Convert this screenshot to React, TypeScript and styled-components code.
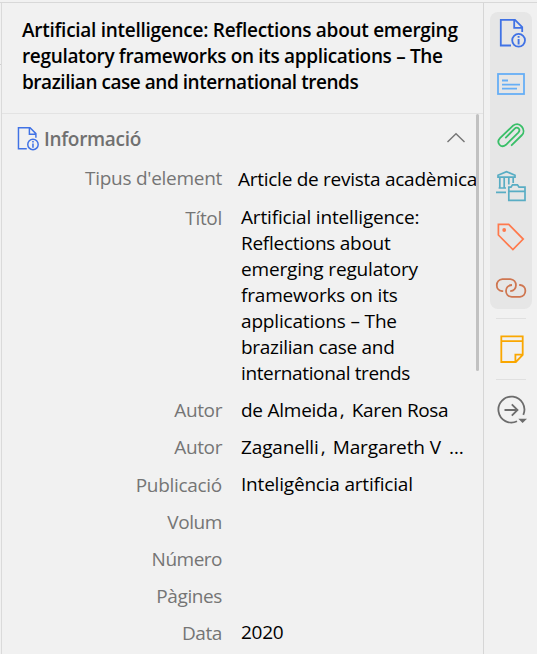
import React from "react";
import styled, { createGlobalStyle } from "styled-components";

const GlobalStyle = createGlobalStyle`
  * { box-sizing: border-box; }
  body { margin: 0; background: #f1f1f1; overflow: hidden; }
`;

const Window = styled.div`
  display: flex;
  flex-direction: column;
  width: 537px;
  height: 654px;
  padding-top: 2px;
  background: #f1f1f1;
  font: 19px/26px "Open Sans", "Noto Sans", sans-serif;
  color: #000;
  overflow: hidden;
`;
const TopRule = styled.div`
  flex: none;
  height: 1px;
  background: #d8d8d8;
`;
const Columns = styled.div`
  display: flex;
  flex: 1;
  min-height: 0;
`;
const Edge = styled.div`
  flex: none;
  width: 2px;
  border-right: 1px solid #dadada;
`;
const EdgeTick = styled.div`
  height: 1px;
  margin-top: 61px;
  background: #cfcfcf;
`;
const Pane = styled.main`
  flex: none;
  display: flex;
  flex-direction: column;
  width: 481px;
`;
const Title = styled.h1`
  flex: none;
  height: 111px;
  margin: 0;
  padding: 14px 0 0 20px;
  border-bottom: 1px solid #e3e3e3;
  font-size: 19px;
  line-height: 26px;
  font-weight: 600;
`;
const Line = styled.span<{ $track?: number }>`
  display: block;
  white-space: pre;
  letter-spacing: ${(p) => p.$track ?? 0}px;
`;
const Body = styled.div`
  display: flex;
  flex: 1;
  min-height: 0;
`;
const Fields = styled.section`
  flex: none;
  width: 474px;
`;
const ScrollThumb = styled.div`
  flex: none;
  width: 3px;
  height: 257px;
  border-radius: 2px;
  background: #c1c1c1;
`;
const SectionHead = styled.header`
  display: flex;
  align-items: center;
  height: 48px;
  margin-bottom: 4px;
  padding: 0 10px 0 15px;
`;
const SectionName = styled.h2`
  flex: 1;
  margin: 1px 0 0 5px;
  font-size: 19px;
  line-height: 26px;
  font-weight: 600;
  color: #707070;
`;
const Rows = styled.div`
  display: flex;
  flex-direction: column;
  gap: 11px;
`;
const Row = styled.div<{ $height?: number }>`
  display: grid;
  grid-template-columns: 220px 1fr;
  column-gap: 19px;
  min-height: ${(p) => p.$height ?? 26}px;
`;
const Label = styled.div<{ $drop?: number }>`
  display: flex;
  justify-content: flex-end;
  padding-top: ${(p) => Math.max(p.$drop ?? 0, 0)}px;
  margin-top: ${(p) => Math.min(p.$drop ?? 0, 0)}px;
  height: 26px;
  color: #757575;
`;
const Value = styled.div<{ $menu?: boolean }>`
  display: flex;
  flex-direction: column;
  margin-left: ${(p) => (p.$menu ? -3 : 0)}px;
  white-space: nowrap;
`;
const Names = styled.div`
  display: flex;
`;
const Comma = styled.span`
  width: 14px;
  padding-left: 2px;
`;
const Ellipsis = styled.span`
  margin-left: 8px;
`;
const SideNav = styled.nav`
  flex: 1;
  display: flex;
  flex-direction: column;
  align-items: center;
  padding: 9px 5px 0 6px;
  border-left: 1px solid #d6d6d6;
`;
const NavGroup = styled.div`
  flex: none;
  display: flex;
  flex-direction: column;
  gap: 19px;
  width: 42px;
  height: 297px;
  margin-bottom: 9px;
  padding-top: 5px;
  border-radius: 8px;
  background: #e6e6e6;
`;
const NavButton = styled.div<{ $height?: number; $indent?: number }>`
  flex: none;
  display: flex;
  align-items: center;
  justify-content: center;
  width: 42px;
  height: ${(p) => p.$height ?? 32}px;
  padding-left: ${(p) => p.$indent ?? 0}px;
`;
const Divider = styled.div`
  flex: none;
  width: 30px;
  height: 1px;
  background: #e0e0e0;
`;

const InfoIcon = ({ w, h }: { w: number; h: number }) => (
  <svg width={w} height={h} viewBox="0 0 27 30" fill="none" stroke="#4072e5" strokeWidth="1.8">
    <path d="M12 27.5H1.8V1.8H16L23.2 9V14M15.2 1.8V9.8H23.2" />
    <circle cx="19.6" cy="22.3" r="6.4" />
    <path d="M19.6 21V26.5M19.6 18V19.8" strokeWidth="1.9" />
  </svg>
);
const AbstractIcon = () => (
  <svg width="30" height="24" viewBox="0 0 30 24" fill="none" stroke="#66aef5" strokeWidth="1.8">
    <rect x="2" y="2" width="26" height="20" />
    <path d="M6 8.5H12M6 12.7H24M6 16.6H21" />
  </svg>
);
const ClipIcon = () => (
  <svg width="30" height="28" viewBox="0 0 30 28" fill="none" stroke="#39bf68" strokeWidth="1.8" strokeLinecap="round" strokeLinejoin="round">
    <path d="M15.7 24.2L26 14C30.5 9.3 24-.5 16.8 4.8L4 17.2C-.2 21.8 5 27.8 10 23.8L22.3 11.6C25.2 8.5 21.3 5 18.7 7.6L9.8 16.6" />
  </svg>
);
const LibraryIcon = () => (
  <svg width="32" height="32" viewBox="0 0 32 32" fill="none" stroke="#59adc4" strokeWidth="1.7">
    <path d="M3 5.2L11.5 1.6L20 5.2V7.2H3ZM1 22.4H11M3.6 18H11M4.8 7.2V18M9.2 7.2V18M13.8 7.2V14.5M18.2 7.2V13" />
    <path d="M13.8 30.3V17.2H16L17.5 14.9H22.5L24 17.2H30V30.3ZM13.8 21.3H30" />
  </svg>
);
const TagIcon = () => (
  <svg width="30" height="30" viewBox="0 0 30 30" fill="none" stroke="#ff794c" strokeWidth="1.7">
    <path d="M2.4 2.3H12.7L27.2 17.1L16.9 27.6L2.4 13Z" />
    <circle cx="8.2" cy="8" r="1.9" fill="#ff794c" stroke="none" />
  </svg>
);
const LinkIcon = () => (
  <svg width="32" height="22" viewBox="0 0 32 22" fill="none" stroke="#cf7650" strokeWidth="1.8">
    <path d="M8.2 14.1H7C-.2 13.3.2 2.7 7.4 2.2H15.2C22.7 2.6 23 13.6 15.2 14.1" />
    <path d="M24.2 8H25.2C32.4 8.8 31.8 19.2 25 19.8H16.8C9 19.4 9.1 8.3 17 8" />
  </svg>
);
const NoteIcon = () => (
  <svg width="24" height="29" viewBox="0 0 24 29" fill="none" stroke="#faa700" strokeWidth="1.8">
    <path d="M1.3 1.3H22.7V20L15.8 27H1.3ZM1.3 6.2H22.7M15.4 27V19.6H22.7" />
  </svg>
);
const LocateIcon = () => (
  <svg width="30" height="30" viewBox="0 0 30 30" fill="none" stroke="#6c6c6c" strokeWidth="1.8">
    <path d="M20 26.3A13 13 0 1 1 26.3 19.8M7.5 15H20.5M14.8 9.3L20.5 15L14.8 20.7" />
    <path d="M21.3 23.7H30L25.6 28Z" fill="#6c6c6c" stroke="none" />
  </svg>
);
const Chevron = () => (
  <svg width="20" height="12" viewBox="0 0 20 12" fill="none" stroke="#757575" strokeWidth="1.4">
    <path d="M1.5 10L10 1.7L18.5 10" />
  </svg>
);

type Tracked = [text: string, track: number];

const titleLines: Tracked[] = [
  ["Artificial intelligence: Reflections about emerging", -0.27],
  ["regulatory frameworks on its applications – The", -0.33],
  ["brazilian case and international trends", -0.46],
];
const titleField: Tracked[] = [
  ["Artificial intelligence:", -0.17],
  ["Reflections about", -0.27],
  ["emerging regulatory", -0.16],
  ["frameworks on its", -0.17],
  ["applications – The", -0.17],
  ["brazilian case and", -0.28],
  ["international trends", -0.37],
];
const emptyFields: Tracked[] = [["Volum", -0.4], ["Número", -0.5], ["Pàgines", -0.4]];

const Lines = ({ items }: { items: Tracked[] }) => (
  <>
    {items.map(([text, track]) => <Line key={text} $track={track}>{text}</Line>)}
  </>
);

export default function App() {
  return (
    <>
      <GlobalStyle />
      <Window>
        <TopRule />
        <Columns>
          <Edge><EdgeTick /></Edge>
          <Pane>
            <Title><Lines items={titleLines} /></Title>
            <Body>
              <Fields>
                <SectionHead>
                  <InfoIcon w={22} h={25} />
                  <SectionName><Line $track={-0.3}>Informació</Line></SectionName>
                  <Chevron />
                </SectionHead>
                <Rows>
                  <Row $height={27}>
                    <Label $drop={-1}><Line $track={-0.28}>Tipus d'element</Line></Label>
                    <Value $menu><Line $track={-0.27}>Article de revista acadèmica</Line></Value>
                  </Row>
                  <Row>
                    <Label $drop={1}><Line $track={-0.3}>Títol</Line></Label>
                    <Value><Lines items={titleField} /></Value>
                  </Row>
                  <Row>
                    <Label><Line $track={-0.4}>Autor</Line></Label>
                    <Value>
                      <Names><Line $track={-0.25}>de Almeida</Line><Comma>,</Comma><Line $track={-0.35}>Karen Rosa</Line></Names>
                    </Value>
                  </Row>
                  <Row>
                    <Label><Line $track={-0.4}>Autor</Line></Label>
                    <Value>
                      <Names><Line $track={-0.15}>Zaganelli</Line><Comma>,</Comma><Line $track={-0.1}>Margareth V</Line><Ellipsis>…</Ellipsis></Names>
                    </Value>
                  </Row>
                  <Row>
                    <Label $drop={1}><Line $track={-0.3}>Publicació</Line></Label>
                    <Value><Line $track={-0.2}>Inteligência artificial</Line></Value>
                  </Row>
                  {emptyFields.map(([name, track]) => (
                    <Row key={name}><Label $drop={1}><Line $track={track}>{name}</Line></Label></Row>
                  ))}
                  <Row>
                    <Label $drop={1}><Line $track={-0.4}>Data</Line></Label>
                    <Value><Line $track={-0.3}>2020</Line></Value>
                  </Row>
                </Rows>
              </Fields>
              <ScrollThumb />
            </Body>
          </Pane>
          <SideNav>
            <NavGroup>
              <NavButton $indent={3}><InfoIcon w={27} h={30} /></NavButton>
              <NavButton><AbstractIcon /></NavButton>
              <NavButton><ClipIcon /></NavButton>
              <NavButton><LibraryIcon /></NavButton>
              <NavButton><TagIcon /></NavButton>
              <NavButton><LinkIcon /></NavButton>
            </NavGroup>
            <Divider />
            <NavButton $height={60} $indent={2}><NoteIcon /></NavButton>
            <Divider />
            <NavButton $height={60} $indent={2}><LocateIcon /></NavButton>
          </SideNav>
        </Columns>
      </Window>
    </>
  );
}
